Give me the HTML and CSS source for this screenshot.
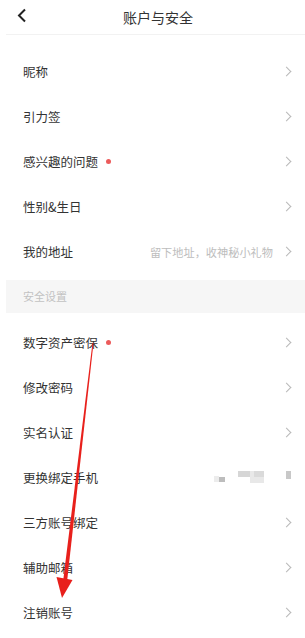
FILE: index.html
```html
<!DOCTYPE html>
<html lang="zh-CN">
<head>
    <meta charset="UTF-8">
    <meta name="viewport" content="width=device-width, initial-scale=1.0">
    <title>账户与安全</title>
    <link rel="stylesheet" href="styles.css">
</head>
<body>
    <div class="page">
        <div class="header">
            <svg class="back" width="10" height="15" viewBox="0 0 10 15">
                <path d="M8 1.5 L2 7.5 L8 13.5" fill="none" stroke="#222" stroke-width="2"/>
            </svg>
            <h1>账户与安全</h1>
        </div>

        <div class="list first">
            <div class="row"><span class="label">昵称</span><span class="arrow"></span></div>
            <div class="row"><span class="label">引力签</span><span class="arrow"></span></div>
            <div class="row"><span class="label">感兴趣的问题</span><span class="dot"></span><span class="arrow"></span></div>
            <div class="row"><span class="label">性别&amp;生日</span><span class="arrow"></span></div>
            <div class="row"><span class="label">我的地址</span><span class="hint">留下地址，收神秘小礼物</span><span class="arrow"></span></div>
        </div>

        <div class="section">安全设置</div>

        <div class="list">
            <div class="row"><span class="label">数字资产密保</span><span class="dot"></span><span class="arrow"></span></div>
            <div class="row"><span class="label">修改密码</span><span class="arrow"></span></div>
            <div class="row"><span class="label">实名认证</span><span class="arrow"></span></div>
            <div class="row">
                <span class="label">更换绑定手机</span>
                <span class="blur">
                    <i class="b1"></i><i class="b2"></i><i class="b3"></i><i class="b4"></i><i class="b6"></i><i class="b5"></i>
                </span>
            </div>
            <div class="row"><span class="label">三方账号绑定</span><span class="arrow"></span></div>
            <div class="row"><span class="label">辅助邮箱</span><span class="arrow"></span></div>
            <div class="row"><span class="label">注销账号</span><span class="arrow"></span></div>
        </div>
    </div>

    <!-- annotation arrow drawn over the screenshot -->
    <svg class="mark" width="305" height="638" viewBox="0 0 305 638">
        <polygon points="92.5,343 93.5,343 67,582 63,582" fill="#e8201c"/>
        <polygon points="56.5,577 72.5,580 62,598" fill="#e8201c"/>
    </svg>
</body>
</html>
```

FILE: styles.css
```css
body {
    margin: 0;
    background: #fff;
    font-family: "Noto Sans CJK SC", "Noto Sans", sans-serif;
    color: #333;
}
.page {
    position: relative;
    width: 299px;
    margin-left: 6px;
}
.header {
    position: relative;
    height: 34px;
    border-bottom: 1px solid #f2f2f2;
    display: flex;
    align-items: center;
    justify-content: center;
}
.header .back {
    position: absolute;
    left: 11px;
    top: 8px;
}
.header h1 {
    margin: 0 0 0 5px;
    font-size: 14px;
    font-weight: 400;
    color: #333;
}
.list.first {
    padding-top: 14px;
}
.row {
    height: 45px;
    display: flex;
    align-items: center;
    padding: 0 13px 0 17px;
    font-size: 12.5px;
}
.label {
    color: #333;
}
.dot {
    width: 5px;
    height: 5px;
    border-radius: 50%;
    background: #ec5b5b;
    margin-left: 8px;
}
.hint {
    margin-left: auto;
    margin-right: 10px;
    font-size: 11.2px;
    color: #bdbdbd;
}
.arrow {
    margin-left: auto;
    width: 6px;
    height: 6px;
    border-top: 1.2px solid #b8b8b8;
    border-right: 1.2px solid #b8b8b8;
    transform: rotate(45deg);
    margin-right: 2px;
}
.hint + .arrow {
    margin-left: 0;
}
.section {
    margin: 6px 0 7px;
    height: 33px;
    line-height: 33px;
    background: #f6f6f6;
    padding-left: 17px;
    font-size: 11px;
    color: #c2c2c2;
}
.blur {
    margin-left: auto;
    position: relative;
    width: 78px;
    height: 14px;
}
.blur i {
    position: absolute;
    display: block;
}
.blur .b1 { left: 0; top: 5px; width: 5px; height: 6px; background: #ececec; }
.blur .b2 { left: 5px; top: 6px; width: 6px; height: 5px; background: #bdbdbd; }
.blur .b3 { left: 24px; top: 0; width: 12px; height: 6px; background: #d6d6d6; }
.blur .b4 { left: 36px; top: 0; width: 14px; height: 12px; background: #e8e8e8; }
.blur .b6 { left: 40px; top: 0; width: 10px; height: 6px; background: #dadada; }
.blur .b5 { left: 72px; top: 0; width: 5px; height: 8px; background: #c8c8c8; }
.mark {
    position: absolute;
    left: 0;
    top: 0;
    pointer-events: none;
}
```
